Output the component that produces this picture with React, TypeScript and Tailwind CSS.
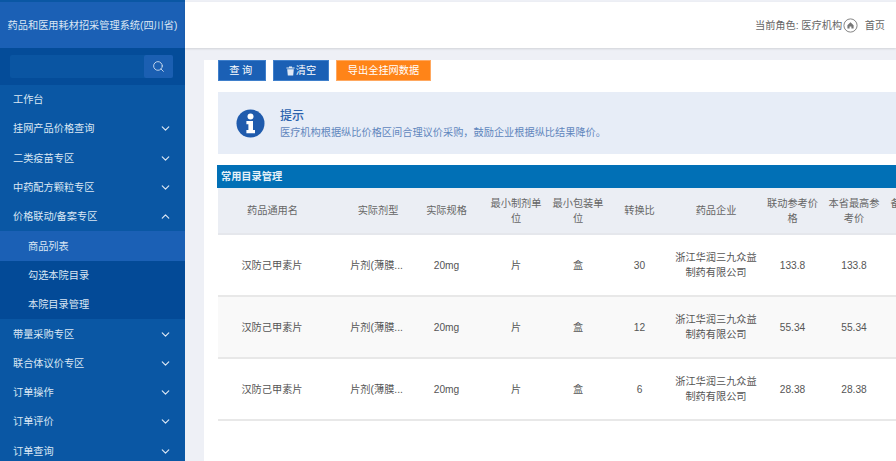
import { ChevronDown, ChevronUp, Search } from 'lucide-react';

const menu = [
  { label: '工作台' },
  { label: '挂网产品价格查询', arrow: 'down' },
  { label: '二类疫苗专区', arrow: 'down' },
  { label: '中药配方颗粒专区', arrow: 'down' },
  { label: '价格联动/备案专区', arrow: 'up' },
  { label: '商品列表', sub: true, active: true },
  { label: '勾选本院目录', sub: true },
  { label: '本院目录管理', sub: true },
  { label: '带量采购专区', arrow: 'down' },
  { label: '联合体议价专区', arrow: 'down' },
  { label: '订单操作', arrow: 'down' },
  { label: '订单评价', arrow: 'down' },
  { label: '订单查询', arrow: 'down' },
];

const rows = [
  { ratio: '30', link: '133.8', high: '133.8' },
  { ratio: '12', link: '55.34', high: '55.34' },
  { ratio: '6', link: '28.38', high: '28.38' },
];

const gridCols = 'grid grid-cols-[130px_60px_77px_62px_62px_61px_92px_61px_62px_62px]';

export default function App() {
  return (
    <div className="flex h-[461px] w-[896px] overflow-hidden bg-[#eef0f6] font-['Liberation_Sans','Noto_Sans_CJK_SC',sans-serif] text-[10.2px] leading-[15px] text-[#555]">
      {/* Sidebar */}
      <aside className="flex w-[185px] shrink-0 flex-col bg-[#0a57a4] pt-[2px] text-[#dbe7f4]">
        <div className="flex h-[46px] shrink-0 items-center justify-center whitespace-nowrap bg-[#1b60b5] text-[#dbe7f4]">
          药品和医用耗材招采管理系统(四川省)
        </div>
        <div className="h-[37px] shrink-0 bg-[#044c99] px-[10px] pt-[7px]">
          <div className="flex h-[23px] w-[163px] justify-end rounded-[2px] bg-[#0a55a2]">
            <div className="flex w-[29px] items-center justify-center rounded-[2px] bg-[#1b5fb2]">
              <Search size={13} strokeWidth={1.6} className="text-[#d5e2f2]" />
            </div>
          </div>
        </div>
        <nav className="flex flex-col">
          {menu.map((item) => (
            <div
              key={item.label}
              className={`flex h-[29.3px] shrink-0 items-center justify-between pr-[13px] ${
                item.sub ? 'pl-[28px]' : 'pl-[13px]'
              } ${item.active ? 'bg-[#1b60b5]' : item.sub ? 'bg-[#034a97]' : ''}`}
            >
              <span>{item.label}</span>
              {item.arrow === 'down' && <ChevronDown size={13} strokeWidth={2.2} className="text-[#dbe7f4]" />}
              {item.arrow === 'up' && <ChevronUp size={13} strokeWidth={2.2} className="text-[#dbe7f4]" />}
            </div>
          ))}
        </nav>
      </aside>

      <div className="flex min-w-0 flex-1 flex-col">
        {/* Top bar */}
        <header className="mt-[2px] flex h-[46px] shrink-0 items-center justify-end bg-white pr-[11px] text-[#666] shadow-[0_1px_2px_rgba(0,0,0,0.12)]">
          <span>当前角色: 医疗机构</span>
          <svg width="15" height="15" viewBox="0 0 15 15" className="ml-[0.5px]">
            <circle cx="7.5" cy="7.5" r="6.6" fill="none" stroke="#777" strokeWidth="0.9" />
            <path d="M7.5 4.3 4.4 7.2v3.2h2.2V8.6h1.8v1.8h2.2V7.2z" fill="#777" />
          </svg>
          <span className="ml-[7px]">首页</span>
        </header>

        {/* Content panel */}
        <main className="ml-[19px] mt-[12px] flex min-h-0 flex-1 flex-col bg-white pl-[14px]">
          <div className="flex h-[21px] shrink-0 gap-[7px] text-white">
            <button className="h-full w-[48px] border border-[#3f7fcb] bg-[#1b60b5] tracking-[2.5px]">查询</button>
            <button className="flex h-full w-[56px] items-center justify-center gap-[1px] border border-[#3f7fcb] bg-[#1b60b5]">
              <svg width="9" height="10" viewBox="0 0 9 10">
                <path d="M3 .6h3v1h2.6v1H.4v-1H3zM1.2 3.2h6.6L7.2 9.6H1.8z" fill="#dfe9f5" />
              </svg>
              <span>清空</span>
            </button>
            <button className="h-full w-[95px] border border-[#ffa860] bg-[#ff8418]">导出全挂网数据</button>
          </div>

          <div className="mt-[11px] flex h-[62px] shrink-0 items-center bg-[#e7edf7] pl-[18px]">
            <svg width="29" height="29" viewBox="0 0 29 29">
              <circle cx="14.5" cy="14.5" r="14" fill="#1f5bad" />
              <circle cx="14.5" cy="7.6" r="3" fill="#fff" />
              <path d="M10.4 12h6.6v9h2v3.2h-8.6V21h2v-5.8h-2z" fill="#fff" />
            </svg>
            <div className="ml-[15px]">
              <div className="text-[12px] leading-[18px] font-medium text-[#2b62ae]">提示</div>
              <div className="text-[#5f86bd]">医疗机构根据纵比价格区间合理议价采购，鼓励企业根据纵比结果降价。</div>
            </div>
          </div>

          <div className="-ml-px mt-[11px] flex h-[23px] shrink-0 items-center bg-[#0170b6] pl-[4px] font-bold text-[#e6f1f8]">
            常用目录管理
          </div>

          {/* Table */}
          <div className="w-[740px]">
            <div className={`${gridCols} h-[47px] items-center border-b-2 border-[#e5e7ec] bg-[#ebeef4] text-center text-[#666]`}>
              <div className="pr-[22px]">
                <span className="pl-[1px]">药品通用名</span>
              </div>
              <div>实际剂型</div>
              <div>实际规格</div>
              <div className="px-[4px]">最小制剂单位</div>
              <div className="px-[4px]">最小包装单位</div>
              <div>转换比</div>
              <div>药品企业</div>
              <div className="px-[4px]">联动参考价格</div>
              <div className="px-[4px]">本省最高参考价</div>
              <div className="px-[4px]">备案参考价格信息</div>
            </div>
            {rows.map((row, i) => (
              <div
                key={row.ratio}
                className={`${gridCols} h-[62px] items-center border-b-2 border-[#e8e8e8] text-center ${
                  i === 1 ? 'bg-[#f9f9f9]' : 'bg-white'
                }`}
              >
                <div className="pr-[22px]">汉防己甲素片</div>
                <div className="whitespace-nowrap pr-[3px]">片剂(薄膜...</div>
                <div>20mg</div>
                <div>片</div>
                <div>盒</div>
                <div>{row.ratio}</div>
                <div className="px-[4px]">浙江华润三九众益制药有限公司</div>
                <div>{row.link}</div>
                <div>{row.high}</div>
                <div></div>
              </div>
            ))}
          </div>
        </main>
      </div>
    </div>
  );
}
